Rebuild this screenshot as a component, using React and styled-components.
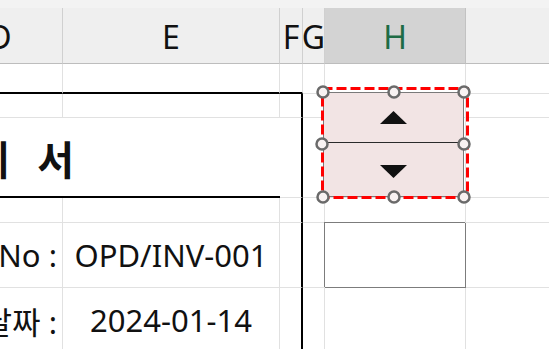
import React from "react";
import styled, { createGlobalStyle } from "styled-components";

const Global = createGlobalStyle`
  html, body { margin: 0; padding: 0; background: #ffffff; }
  body { font-family: "Noto Sans", "Noto Sans CJK KR", sans-serif; }
`;

const GRID = "#e1e1e1";
const HEAD_LINE = "#d0d0d0";
const THICK = "#000000";

const Viewport = styled.div`
  position: relative;
  width: 549px;
  height: 349px;
  overflow: hidden;
  background: #ffffff;
`;

const TopStrip = styled.div`
  height: 8px;
  background: #f3f3f3;
`;

const Sheet = styled.div`
  display: grid;
  width: 611px;
  margin-left: -62px;
  grid-template-columns: 125px 217px 23px 22px 141px 1fr;
  grid-template-rows: 56px 30px 24px 80px 25px 65px 65px;
`;

const Head = styled.div`
  box-sizing: border-box;
  display: flex;
  align-items: center;
  justify-content: center;
  overflow: hidden;
  background: ${(p) => (p.$active ? "#d3d3d3" : "#efefef")};
  color: ${(p) => (p.$active ? "#1e6b45" : "#111111")};
  border-bottom: 1px solid #bdbdbd;
  border-right: ${(p) => (p.$last ? "none" : `1px solid ${p.$active ? "#c2c2c2" : HEAD_LINE}`)};
  font-family: "Noto Sans", sans-serif;
  font-size: 32px;
  line-height: 1;
  padding-top: 2px;
`;

const edge = (kind) =>
  kind === "thick"
    ? `2px solid ${THICK}`
    : kind === "none"
    ? "none"
    : `1px solid ${GRID}`;

const Cell = styled.div`
  box-sizing: border-box;
  display: flex;
  align-items: center;
  justify-content: ${(p) => p.$align || "center"};
  grid-column: ${(p) => (p.$span ? `span ${p.$span}` : "auto")};
  background: #ffffff;
  border-bottom: ${(p) => edge(p.$bb)};
  border-right: ${(p) => edge(p.$br)};
  padding-right: ${(p) => (p.$align === "flex-end" ? "5px" : "0")};
  font-size: 31px;
  color: #111111;
  white-space: nowrap;
  overflow: hidden;
  ${(p) =>
    p.$boxed
      ? `border-right: 1px solid #7c7c7c; border-bottom: 1px solid #7c7c7c; box-shadow: -1px -1px 0 0 #7c7c7c;`
      : ""}
`;

const Title = styled(Cell)`
  justify-content: flex-end;
  padding-right: 178px;
  padding-top: 2px;
  font-family: "Noto Sans CJK KR", sans-serif;
  font-weight: 700;
  font-size: 40px;
  letter-spacing: 28px;
`;

const Spinner = styled.div`
  position: absolute;
  left: 316px;
  top: 82px;
  width: 158px;
  height: 122px;
`;

const SpinBody = styled.div`
  position: absolute;
  left: 7px;
  top: 10px;
  width: 141px;
  height: 105px;
  box-sizing: border-box;
  display: flex;
  flex-direction: column;
  background: #f2e4e4;
  border: 1px solid #7a7a7a;
`;

const SpinHalf = styled.div`
  flex: 1;
  display: flex;
  align-items: center;
  justify-content: center;
  border-bottom: ${(p) => (p.$top ? "1.5px solid #2a2a2a" : "none")};
  padding-top: ${(p) => (p.$top ? "0" : "4px")};
`;

const Selection = styled.svg`
  position: absolute;
  left: 0;
  top: 0;
  width: 158px;
  height: 122px;
  overflow: visible;
`;

const handles = [
  [7, 10],
  [78, 10],
  [148, 10],
  [6, 62],
  [148, 62],
  [7, 115],
  [78, 115],
  [148, 115],
];

function SpinButton() {
  return (
    <Spinner>
      <SpinBody>
        <SpinHalf $top>
          <svg width="27" height="13" viewBox="0 0 27 13">
            <polygon points="13.5,0 27,13 0,13" fill="#111111" />
          </svg>
        </SpinHalf>
        <SpinHalf>
          <svg width="27" height="13" viewBox="0 0 27 13">
            <polygon points="0,0 27,0 13.5,13" fill="#111111" />
          </svg>
        </SpinHalf>
      </SpinBody>
      <Selection viewBox="0 0 158 122">
        <rect
          x="6.5"
          y="6.5"
          width="145"
          height="109"
          fill="none"
          stroke="#ff0000"
          strokeWidth="3"
          strokeDasharray="10 4"
        />
        {handles.map(([x, y], i) => (
          <circle
            key={i}
            cx={x}
            cy={y}
            r="5.5"
            fill="#f8f2f2"
            stroke="#6a6a6a"
            strokeWidth="2.5"
          />
        ))}
      </Selection>
    </Spinner>
  );
}

const cols = ["D", "E", "F", "G", "H", "I"];

export default function App() {
  return (
    <>
      <Global />
      <Viewport>
        <TopStrip />
        <Sheet>
          {cols.map((c, i) => (
            <Head key={c} $active={c === "H"} $last={i === cols.length - 1}>
              {c === "I" ? "" : c}
            </Head>
          ))}

          {/* row 1 */}
          <Cell $bb="thick" />
          <Cell $bb="thick" />
          <Cell $bb="thick" />
          <Cell />
          <Cell />
          <Cell $br="none" />

          {/* row 2 */}
          <Cell />
          <Cell />
          <Cell $br="thick" />
          <Cell />
          <Cell />
          <Cell $br="none" />

          {/* row 3: title */}
          <Title $span={2} $bb="thick" $br="none">
            명세서
          </Title>
          <Cell $br="thick" />
          <Cell />
          <Cell />
          <Cell $br="none" />

          {/* row 4 */}
          <Cell />
          <Cell />
          <Cell $br="thick" />
          <Cell />
          <Cell />
          <Cell $br="none" />

          {/* row 5 */}
          <Cell $align="flex-end">No :</Cell>
          <Cell>OPD/INV-001</Cell>
          <Cell $br="thick" />
          <Cell />
          <Cell $boxed />
          <Cell $br="none" />

          {/* row 6 */}
          <Cell $align="flex-end">날짜 :</Cell>
          <Cell>2024-01-14</Cell>
          <Cell $br="thick" />
          <Cell />
          <Cell />
          <Cell $br="none" />
        </Sheet>
        <SpinButton />
      </Viewport>
    </>
  );
}
